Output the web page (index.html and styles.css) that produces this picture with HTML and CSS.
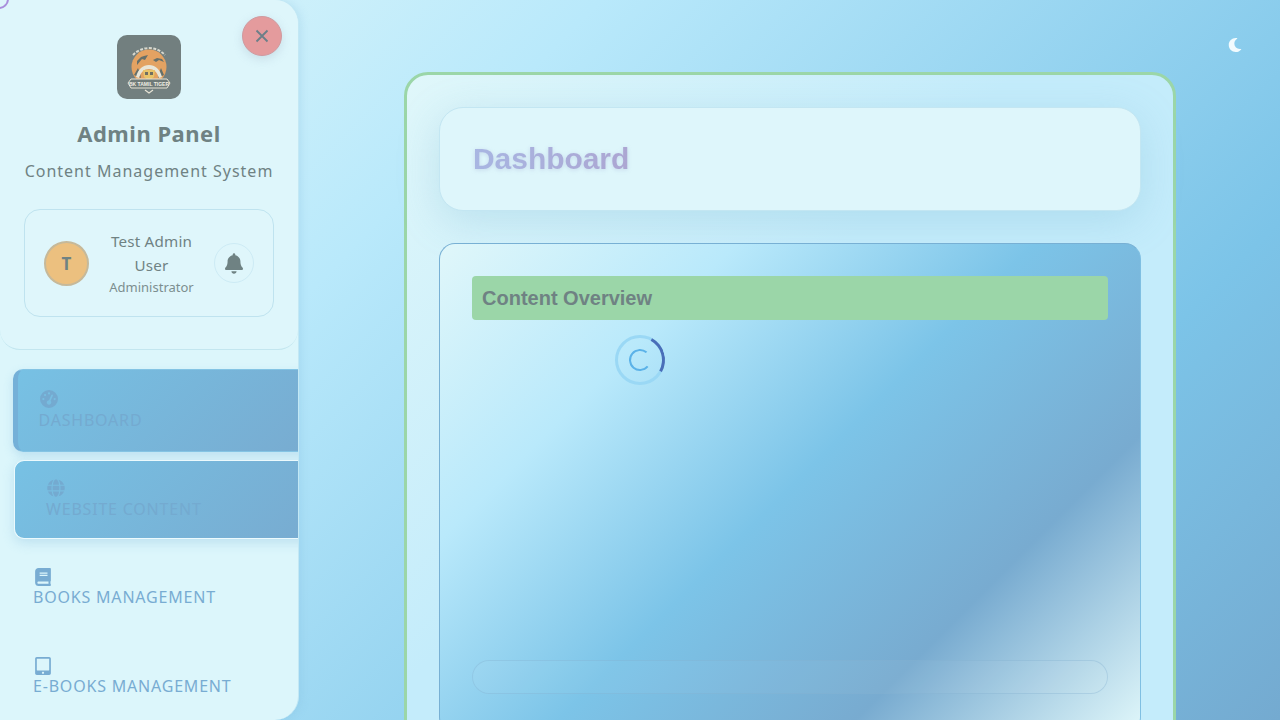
FILE: index.html
```html
<!DOCTYPE html>
<html lang="en">
<head>
<meta charset="utf-8">
<title>Admin Panel</title>
<link rel="stylesheet" href="styles.css">
</head>
<body>
<div class="corner-arc"></div>
<aside class="sidebar">
  <header class="side-head">
    <button class="close" aria-label="Close">
      <svg viewBox="0 0 16 16" width="16" height="16"><path d="M2.5 2.5l11 11M13.5 2.5l-11 11" stroke="currentColor" stroke-width="1.8" fill="none"/></svg>
    </button>
    <div class="logo">
      <svg viewBox="0 0 64 64" width="64" height="64">
        <path d="M16 20a22 22 0 0 1 32 0" fill="none" stroke="#d9d9cf" stroke-width="2" stroke-dasharray="3 1.4"/>
        <circle cx="32" cy="32" r="17.5" fill="#e3a262"/>
        <path d="M20 30l5-6 3 1 3-5-4 1-3 1-4 4zM36 25l4-2 5 1 2 3-5-2-3 2zM17 40l4-7 2 5 1 5zM47 40l-3-7-2 5-1 5z" fill="#66706a"/>
        <path d="M19 42c2-8 7-12 13-12s11 4 13 12l-3 1c-2-6-5-9-10-9s-8 3-10 9z" fill="#e9e6d8"/>
        <path d="M26 35h12l-1 7-5 4-5-4z" fill="#e8c46a"/>
        <path d="M28 37h3v3h-3zM33 37h3v3h-3z" fill="#6f6f62"/>
        <path d="M14 44h36l3 4-3 5H14l-3-5z" fill="#6f7a78" stroke="#e6e2d4" stroke-width="1"/>
        <text class="logo-text" x="32" y="51" text-anchor="middle">BK TAMIL TIGER</text>
        <path d="M28 55l4 3 4-3" fill="none" stroke="#e6e2d4" stroke-width="1.2"/>
      </svg>
    </div>
    <h1 class="brand">Admin Panel</h1>
    <p class="tagline">Content Management System</p>
    <div class="user">
      <div class="avatar">T</div>
      <div class="who">
        <div class="name">Test Admin User</div>
        <div class="role">Administrator</div>
      </div>
      <div class="bell">
        <svg viewBox="0 0 448 512" width="18" height="21"><path fill="currentColor" d="M224 512c35.32 0 63.97-28.65 63.97-64H160.03c0 35.35 28.65 64 63.97 64zm215.39-149.71c-19.32-20.76-55.47-51.99-55.47-154.29 0-77.7-54.48-139.9-127.94-155.16V32c0-17.67-14.32-32-31.98-32s-31.98 14.33-31.98 32v20.84C118.56 68.1 64.08 130.3 64.08 208c0 102.3-36.15 133.53-55.47 154.29-6 6.45-8.66 14.16-8.61 21.71.11 16.4 12.98 32 32.1 32h383.8c19.12 0 32-15.6 32.1-32 .05-7.55-2.61-15.27-8.61-21.71z"/></svg>
      </div>
    </div>
  </header>
  <nav class="nav">
    <a class="item active">
      <svg class="ico" viewBox="0 0 512 512"><path fill="currentColor" d="M0 256a256 256 0 1 1 512 0A256 256 0 1 1 0 256zM288 96a32 32 0 1 0 -64 0 32 32 0 1 0 64 0zM256 416c35.3 0 64-28.7 64-64c0-17.4-6.9-33.1-18.1-44.6L366 161.7c5.3-12.1-.2-26.3-12.3-31.6s-26.3 .2-31.6 12.3L257.9 288c-.6 0-1.3 0-1.9 0c-35.3 0-64 28.7-64 64s28.7 64 64 64zM176 144a32 32 0 1 0 -64 0 32 32 0 1 0 64 0zM96 288a32 32 0 1 0 0-64 32 32 0 1 0 0 64zm352-32a32 32 0 1 0 -64 0 32 32 0 1 0 64 0z"/></svg>
      <span>Dashboard</span>
    </a>
    <a class="item hovered">
      <svg class="ico" viewBox="0 0 496 512"><path fill="currentColor" d="M336.5 160C322 70.7 287.8 8 248 8s-74 62.7-88.5 152h177zM152 256c0 22.2 1.2 43.5 3.3 64h185.3c2.1-20.5 3.3-41.8 3.3-64s-1.2-43.5-3.3-64H155.3c-2.1 20.5-3.3 41.8-3.3 64zm324.7-96c-28.6-67.9-86.5-120.4-158-141.6 24.4 33.8 41.2 84.7 50 141.6h108zM177.2 18.4C105.8 39.6 47.8 92.1 19.3 160h108c8.7-56.9 25.5-107.8 49.9-141.6zM487.4 192H372.7c2.1 21 3.3 42.5 3.3 64s-1.2 43-3.3 64h114.6c5.5-20.5 8.6-41.8 8.6-64s-3.1-43.5-8.5-64zM120 256c0-21.5 1.2-43 3.3-64H8.6C3.2 212.5 0 233.8 0 256s3.2 43.5 8.6 64h114.6c-2-21-3.2-42.5-3.2-64zm39.5 96c14.5 89.3 48.7 152 88.5 152s74-62.7 88.5-152h-177zm159.3 141.6c71.4-21.2 129.4-73.7 158-141.6h-108c-8.8 56.9-25.6 107.8-50 141.6zM19.3 352c28.6 67.9 86.5 120.4 158 141.6-24.4-33.8-41.2-84.7-50-141.6h-108z"/></svg>
      <span>Website Content</span>
    </a>
    <a class="item">
      <svg class="ico" viewBox="0 0 448 512"><path fill="currentColor" d="M448 360V24c0-13.3-10.7-24-24-24H96C43 0 0 43 0 96v320c0 53 43 96 96 96h328c13.3 0 24-10.7 24-24v-16c0-7.5-3.5-14.3-8.9-18.7-4.2-15.4-4.2-59.3 0-74.7 5.4-4.3 8.9-11.1 8.9-18.6zM128 134c0-3.3 2.7-6 6-6h212c3.3 0 6 2.7 6 6v20c0 3.3-2.7 6-6 6H134c-3.3 0-6-2.7-6-6v-20zm0 64c0-3.3 2.7-6 6-6h212c3.3 0 6 2.7 6 6v20c0 3.3-2.7 6-6 6H134c-3.3 0-6-2.7-6-6v-20zm253.4 250H96c-17.7 0-32-14.3-32-32 0-17.6 14.4-32 32-32h285.4c-1.9 17.1-1.9 46.9 0 64z"/></svg>
      <span>Books Management</span>
    </a>
    <a class="item">
      <svg class="ico" viewBox="0 0 448 512"><path fill="currentColor" d="M400 0H48C21.5 0 0 21.5 0 48v416c0 26.5 21.5 48 48 48h352c26.5 0 48-21.5 48-48V48c0-26.5-21.5-48-48-48zM224 480c-17.7 0-32-14.3-32-32s14.3-32 32-32 32 14.3 32 32-14.3 32-32 32zm176-108c0 6.6-5.4 12-12 12H60c-6.6 0-12-5.4-12-12V60c0-6.6 5.4-12 12-12h328c6.6 0 12 5.4 12 12v312z"/></svg>
      <span>E-Books Management</span>
    </a>
  </nav>
</aside>
<main class="main">
  <button class="theme" aria-label="Toggle theme">
    <svg viewBox="0 0 512 512" width="14" height="14"><path fill="currentColor" d="M283.211 512c78.962 0 151.079-35.925 198.857-94.792 7.068-8.708-.639-21.43-11.562-19.35-124.203 23.654-238.262-71.576-238.262-196.954 0-72.222 38.662-138.635 101.498-174.394 9.686-5.512 7.25-20.197-3.756-22.23A258.156 258.156 0 0 0 283.211 0c-141.309 0-256 114.511-256 256 0 141.309 114.511 256 256 256z"/></svg>
  </button>
  <section class="panel">
    <header class="panel-head"><h2 class="title">Dashboard</h2></header>
    <div class="content">
      <h3 class="bar">Content Overview</h3>
      <div class="spacer"></div>
      <div class="pill"></div>
    </div>
  </section>
  <div class="spinner"><div class="spinner-in"></div></div>
</main>
</body>
</html>
```
FILE: styles.css
```css
* { box-sizing: border-box; }
html, body { height: 100%; }
body {
  margin: 0;
  height: 720px;
  overflow: hidden;
  display: flex;
  font-family: "Noto Sans", "Open Sans", sans-serif;
  color: #6f8283;
  background: linear-gradient(135deg, #e0f7fa 0%, #b9e9fb 30%, #7cc4e8 75%, #74aad0 100%);
}
.corner-arc {
  position: absolute;
  left: -11px;
  top: -11px;
  width: 20px;
  height: 20px;
  border-radius: 50%;
  border: 2px solid transparent;
  border-bottom-color: #a98fdc;
  border-right-color: #a98fdc;
  z-index: 5;
}
.sidebar {
  width: 299px;
  flex: none;
  height: 720px;
  background: #dcf6fb;
  border-radius: 0 24px 24px 0;
  border-right: 1px solid #c3e8f4;
  box-shadow: 2px 0 8px rgba(120, 180, 220, .25);
  overflow: hidden;
  display: flex;
  flex-direction: column;
}
.side-head {
  position: relative;
  height: 350px;
  flex: none;
  padding: 35px 24px 0;
  display: flex;
  flex-direction: column;
  align-items: center;
  background: #def6fb;
  border-bottom: 1px solid #c3e6ef;
  border-radius: 0 0 20px 20px;
}
.close {
  position: absolute;
  left: 242px;
  top: 16px;
  width: 40px;
  height: 40px;
  padding: 0;
  border-radius: 50%;
  border: 1px solid #cf9a9f;
  background: #e49b9d;
  color: #6b7f88;
  display: flex;
  align-items: center;
  justify-content: center;
  box-shadow: 0 3px 10px rgba(150, 170, 190, .3);
}
.logo {
  width: 64px;
  height: 64px;
  border-radius: 10px;
  background: #727f7f;
  overflow: hidden;
}
.logo svg { display: block; }
.logo-text {
  font-family: "Liberation Sans", sans-serif;
  font-size: 5px;
  font-weight: 700;
  fill: #efeee4;
}
.brand {
  margin: 19px 0 0;
  font-size: 22px;
  line-height: 30px;
  font-weight: 700;
  letter-spacing: .5px;
}
.tagline {
  margin: 11px 0 0;
  font-size: 16px;
  line-height: 24px;
  letter-spacing: 1px;
  white-space: nowrap;
}
.user {
  margin-top: 26px;
  width: 250px;
  height: 108px;
  padding: 0 19px;
  display: flex;
  align-items: center;
  gap: 10px;
  border: 1px solid #bfe3ef;
  border-radius: 16px;
  background: #dff6fb;
}
.avatar {
  width: 45px;
  height: 45px;
  flex: none;
  border-radius: 50%;
  background: #ecc07f;
  border: 2px solid #c6b99a;
  display: flex;
  align-items: center;
  justify-content: center;
  font-weight: 700;
  font-size: 17px;
}
.who { flex: 1; text-align: center; min-width: 0; }
.name { font-size: 15.2px; line-height: 24px; letter-spacing: .2px; }
.role { font-size: 13px; line-height: 20px; color: #7c8e8f; }
.bell {
  width: 40px;
  height: 40px;
  flex: none;
  border-radius: 50%;
  border: 1px solid #cdebf5;
  display: flex;
  align-items: center;
  justify-content: center;
}
.nav {
  padding: 19px 0 0 9px;
  margin-right: -20px;
  display: flex;
  flex-direction: column;
  gap: 8px;
}
.item {
  display: flex;
  flex-direction: column;
  align-items: flex-start;
  justify-content: center;
  height: 80.9px;
  padding-left: 24px;
  font-size: 16px;
  line-height: 20px;
  letter-spacing: .8px;
  text-transform: uppercase;
  color: #78acd2;
  border-radius: 10px;
  gap: 1px;
}
.ico { width: 20px; height: 18px; display: block; }
.active, .hovered {
  background: linear-gradient(135deg, #77c1e4 0%, #78abd0 100%);
  color: #74aad0;
  gap: 2px;
  padding-bottom: 2px;
}
.active {
  margin-left: 4px;
  height: 83px;
  border-left: 5px solid #74b0d8;
  padding-left: 20.5px;
  border-top: 1px solid #84c4e4;
  border-bottom: 1px solid #84c4e4;
  box-shadow: 0 4px 10px rgba(120, 180, 220, .3);
}
.hovered {
  margin-left: 5px;
  height: 79px;
  border: 1px solid #ecfafd;
  border-right: 0;
  padding-left: 31px;
  box-shadow: 0 4px 12px rgba(120, 180, 220, .3);
}
.main {
  position: relative;
  flex: 1;
  min-width: 0;
  padding-top: 72px;
  display: flex;
  justify-content: center;
  align-items: flex-start;
}
.theme {
  position: absolute;
  left: 929px;
  top: 38px;
  width: 14px;
  height: 14px;
  padding: 0;
  border: 0;
  background: none;
  color: #f2fbfe;
}
.theme svg { display: block; }
.panel {
  width: 772px;
  height: 760px;
  flex: none;
  margin-left: 1px;
  padding: 32px;
  border: 3px solid #9bd6a8;
  border-radius: 24px;
  background: linear-gradient(135deg, #e0f7fa 0%, #c4ecfb 40%, #c4ecfb 100%);
  display: flex;
  flex-direction: column;
  gap: 32px;
}
.panel-head {
  height: 104px;
  flex: none;
  padding: 0 33px;
  display: flex;
  align-items: center;
  background: #def6fb;
  border: 1px solid #c3e6f2;
  border-radius: 24px;
  box-shadow: 0 10px 40px rgba(120, 180, 210, .28);
}
.title {
  margin: 0;
  font-family: "Liberation Sans", Arial, sans-serif;
  font-size: 30px;
  line-height: 40px;
  font-weight: 700;
  letter-spacing: -.05px;
  color: transparent;
  background: linear-gradient(90deg, #a8b6e2, #aca6d2);
  -webkit-background-clip: text;
  background-clip: text;
  filter: drop-shadow(0 1px 2px rgba(140, 150, 200, .3));
}
.content {
  height: 490px;
  flex: none;
  padding: 32px;
  display: flex;
  flex-direction: column;
  border: 1px solid #78b0d4;
  border-right-color: #7fbfe2;
  border-bottom-color: #7fbfe2;
  border-radius: 16px;
  background: linear-gradient(135deg, #e0f7fa 0%, #b9e9fb 25%, #7cc4e8 50%, #78abd0 75%, #e0f7fa 100%);
}
.bar {
  margin: 0;
  height: 44px;
  flex: none;
  padding: 0 10px;
  display: flex;
  align-items: center;
  font-family: "Liberation Sans", Arial, sans-serif;
  font-size: 20px;
  font-weight: 700;
  color: #6f8283;
  background: #9bd6a8;
  border-radius: 4px;
}
.spacer { height: 340px; flex: none; }
.pill {
  height: 34px;
  flex: none;
  border: 1px solid rgba(130, 175, 205, .35);
  border-radius: 17px;
  background: rgba(255, 255, 255, .04);
}
.spinner {
  position: absolute;
  left: 316px;
  top: 335px;
  width: 50px;
  height: 50px;
  border-radius: 50%;
  border: 3px solid #9ad8f5;
  display: flex;
  align-items: center;
  justify-content: center;
}
.spinner::before {
  content: "";
  position: absolute;
  inset: -3px;
  border-radius: 50%;
  border: 3px solid transparent;
  border-right-color: #4a6eb8;
  transform: rotate(-16deg);
}
.spinner-in {
  width: 22px;
  height: 22px;
  border-radius: 50%;
  border: 2px solid #5bb2e8;
  border-right-color: transparent;
  transform: rotate(-5deg);
}
```
